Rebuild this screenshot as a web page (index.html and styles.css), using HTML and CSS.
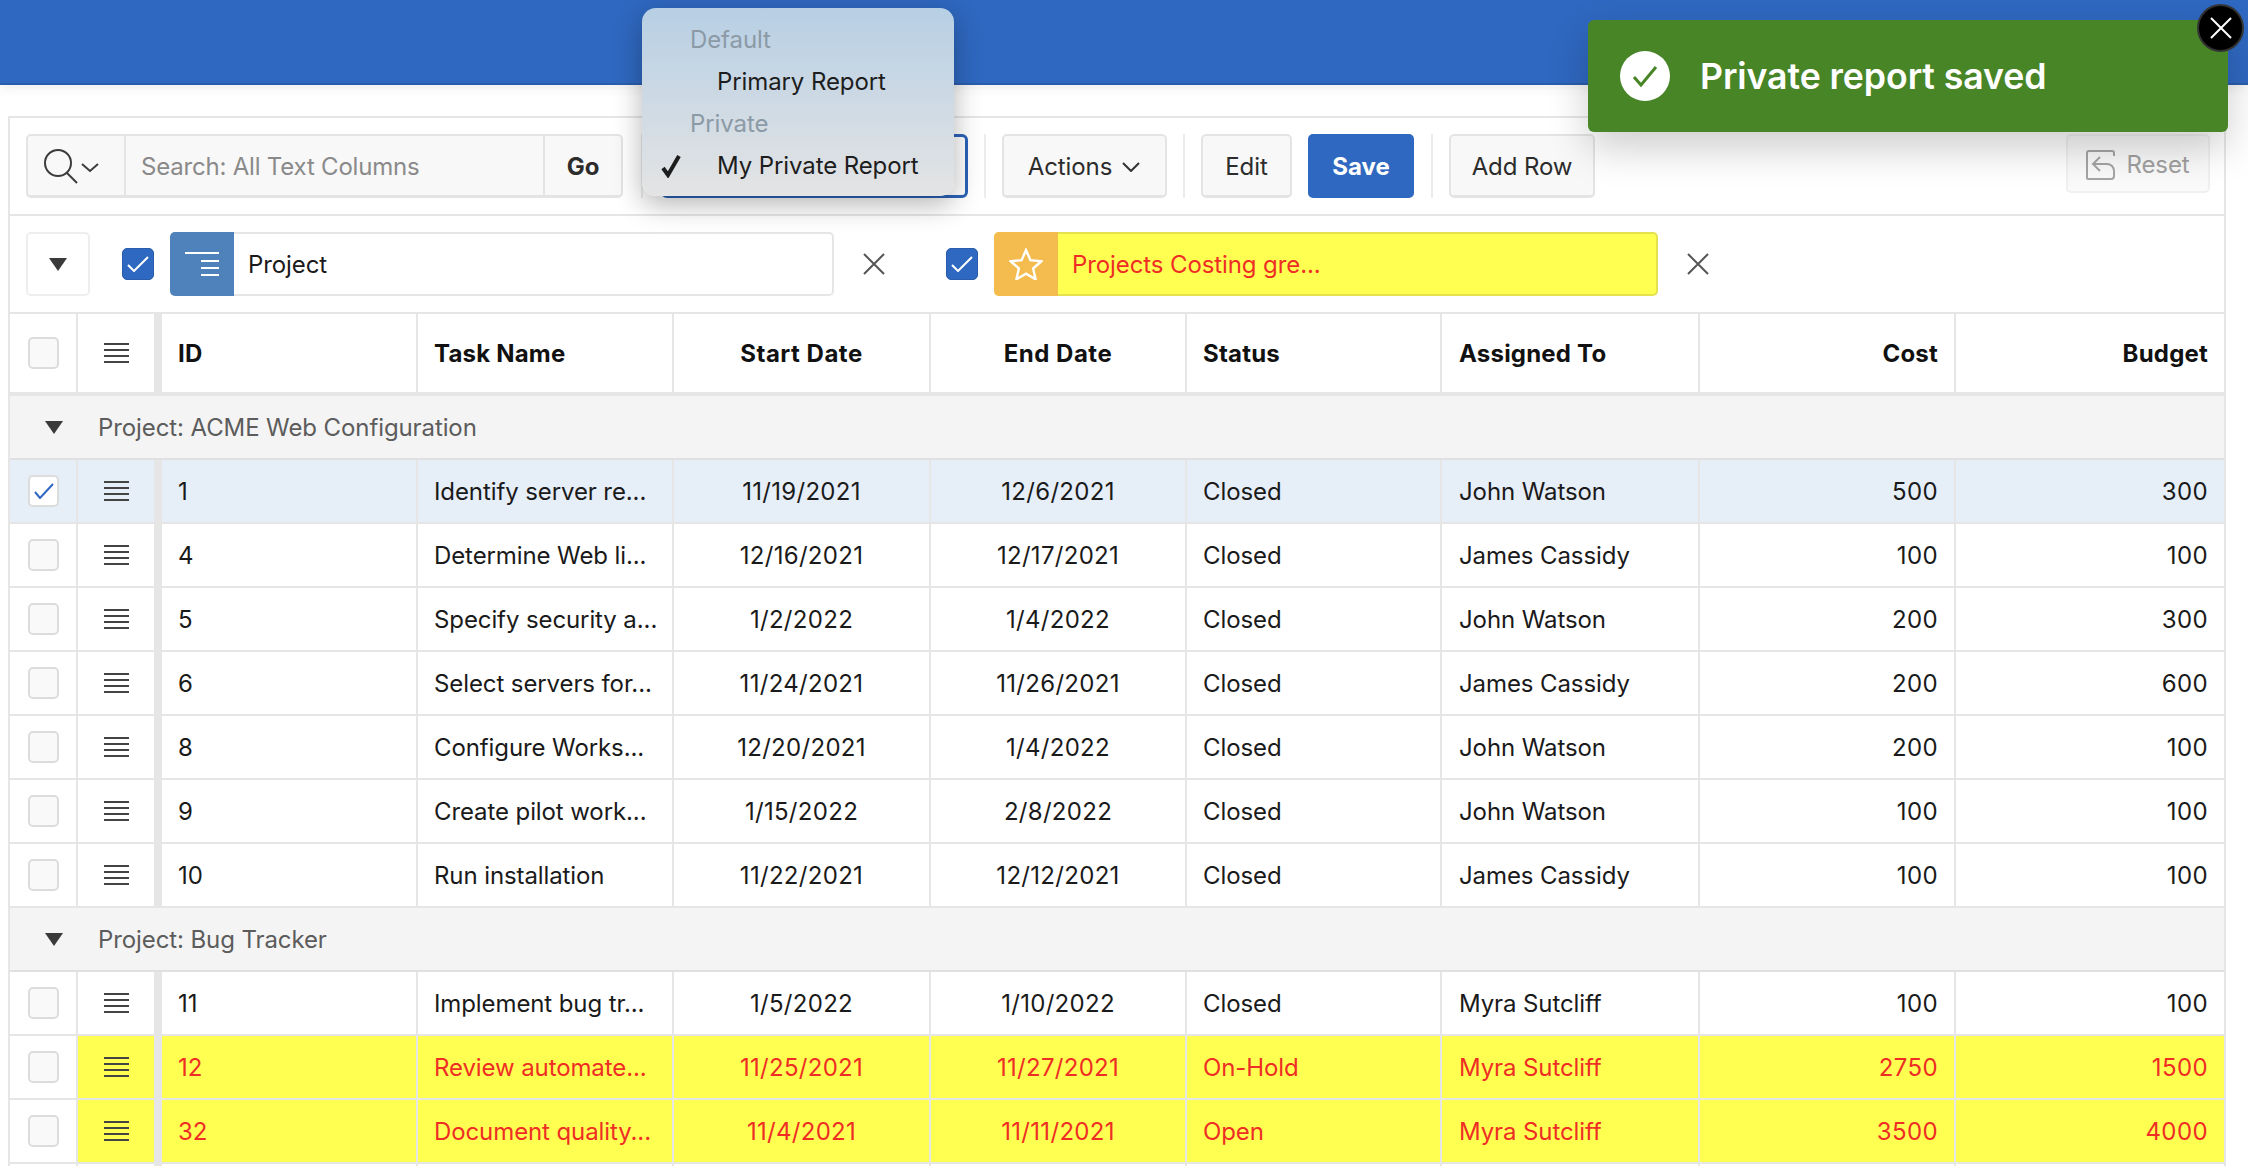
FILE: index.html
```html
<!DOCTYPE html>
<html lang="en">

<head>
    <meta charset="UTF-8">
    <title>Interactive Grid</title>
    <link rel="stylesheet" href="styles.css">
</head>

<body>
    <header class="topbar"></header>

    <main class="page">
        <section class="grid-region">
            <div class="toolbar">
                <div class="search">
                    <button class="search-type">
                        <svg width="72" height="52" viewBox="0 0 72 52" fill="none" stroke="#3c3c3c" stroke-width="2">
                            <circle cx="18" cy="23" r="13" />
                            <path d="M27 33l10 10" />
                            <path d="M42 24l8 7 8-7" />
                        </svg>
                    </button>
                    <div class="search-input">Search: All Text Columns</div>
                    <button class="search-go">Go</button>
                </div>
                <span class="tb-sep sep-a"></span>
                <div class="report-select"></div>
                <span class="tb-sep"></span>
                <button class="btn btn-actions">Actions
                    <svg width="20" height="10" viewBox="0 0 20 10" fill="none" stroke="#333" stroke-width="2">
                        <path d="M2 1l8 8 8-8" />
                    </svg>
                </button>
                <span class="tb-sep"></span>
                <button class="btn btn-edit">Edit</button>
                <button class="btn btn-save">Save</button>
                <span class="tb-sep"></span>
                <button class="btn btn-add">Add Row</button>
                <button class="btn btn-reset">
                    <svg width="30" height="30" viewBox="0 0 30 30" fill="none" stroke="#a5a5a5" stroke-width="2">
                        <path d="M28 6V3a2 2 0 0 0-2-2H3a2 2 0 0 0-2 2v25a1 1 0 0 0 1 1h23a3 3 0 0 0 3-3v-5c0-4-3-7-7-7H8" />
                        <path d="M14 7l-7 7 7 7" />
                    </svg>
                    Reset
                </button>
            </div>

            <div class="filters">
                <button class="filter-toggle"><span class="tri"></span></button>
                <span class="cb-on">
                    <svg width="22" height="16" viewBox="0 0 22 16" fill="none" stroke="#fff" stroke-width="2">
                        <path d="M1 9l6 6L21 1" />
                    </svg>
                </span>
                <div class="chip">
                    <span class="chip-icon">
                        <svg width="34" height="24" viewBox="0 0 34 24" fill="none" stroke="#fff" stroke-width="2">
                            <path d="M0 1h34M16 9h18M16 16h18M16 23h18" />
                        </svg>
                    </span>
                    <span class="chip-label">Project</span>
                </div>
                <svg class="chip-x" width="22" height="22" viewBox="0 0 22 22" fill="none" stroke="#555" stroke-width="2">
                    <path d="M1 1l20 20M21 1L1 21" />
                </svg>
                <span class="cb-on">
                    <svg width="22" height="16" viewBox="0 0 22 16" fill="none" stroke="#fff" stroke-width="2">
                        <path d="M1 9l6 6L21 1" />
                    </svg>
                </span>
                <div class="chip chip-hl">
                    <span class="chip-icon">
                        <svg width="34" height="32" viewBox="0 0 34 32" fill="none" stroke="#fff" stroke-width="2.4">
                            <path d="M17 2l4.400 10.200 11 1-8.300 7.300 2.500 10.800L17 25.600 7.400 31.300l2.500-10.800-8.300-7.300 11-1z" />
                        </svg>
                    </span>
                    <span class="chip-label">Projects Costing gre...</span>
                </div>
                <svg class="chip-x" width="22" height="22" viewBox="0 0 22 22" fill="none" stroke="#555" stroke-width="2">
                    <path d="M1 1l20 20M21 1L1 21" />
                </svg>
            </div>

            <div class="row head">
                <div class="c c-sel"><span class="cb"></span></div>
                <div class="c c-act"><span class="burger"></span></div>
                <div class="c">ID</div>
                <div class="c">Task Name</div>
                <div class="c mid">Start Date</div>
                <div class="c mid">End Date</div>
                <div class="c">Status</div>
                <div class="c c-who">Assigned To</div>
                <div class="c num">Cost</div>
                <div class="c num last">Budget</div>
            </div>

            <div class="group"><span class="tri"></span>Project: ACME Web Configuration</div>

            <div class="row selected">
                <div class="c c-sel"><span class="cb cb-checked">
                    <svg width="20" height="16" viewBox="0 0 20 16" fill="none" stroke="#2f68c0" stroke-width="2">
                        <path d="M1 9l5 6L19 1" />
                    </svg>
                </span></div>
                <div class="c c-act"><span class="burger"></span></div>
                <div class="c">1</div>
                <div class="c">Identify server re...</div>
                <div class="c mid">11/19/2021</div>
                <div class="c mid">12/6/2021</div>
                <div class="c">Closed</div>
                <div class="c c-who">John Watson</div>
                <div class="c num">500</div>
                <div class="c num last">300</div>
            </div>
            <div class="row">
                <div class="c c-sel"><span class="cb"></span></div>
                <div class="c c-act"><span class="burger"></span></div>
                <div class="c">4</div>
                <div class="c">Determine Web li...</div>
                <div class="c mid">12/16/2021</div>
                <div class="c mid">12/17/2021</div>
                <div class="c">Closed</div>
                <div class="c c-who">James Cassidy</div>
                <div class="c num">100</div>
                <div class="c num last">100</div>
            </div>
            <div class="row">
                <div class="c c-sel"><span class="cb"></span></div>
                <div class="c c-act"><span class="burger"></span></div>
                <div class="c">5</div>
                <div class="c">Specify security a...</div>
                <div class="c mid">1/2/2022</div>
                <div class="c mid">1/4/2022</div>
                <div class="c">Closed</div>
                <div class="c c-who">John Watson</div>
                <div class="c num">200</div>
                <div class="c num last">300</div>
            </div>
            <div class="row">
                <div class="c c-sel"><span class="cb"></span></div>
                <div class="c c-act"><span class="burger"></span></div>
                <div class="c">6</div>
                <div class="c">Select servers for...</div>
                <div class="c mid">11/24/2021</div>
                <div class="c mid">11/26/2021</div>
                <div class="c">Closed</div>
                <div class="c c-who">James Cassidy</div>
                <div class="c num">200</div>
                <div class="c num last">600</div>
            </div>
            <div class="row">
                <div class="c c-sel"><span class="cb"></span></div>
                <div class="c c-act"><span class="burger"></span></div>
                <div class="c">8</div>
                <div class="c">Configure Works...</div>
                <div class="c mid">12/20/2021</div>
                <div class="c mid">1/4/2022</div>
                <div class="c">Closed</div>
                <div class="c c-who">John Watson</div>
                <div class="c num">200</div>
                <div class="c num last">100</div>
            </div>
            <div class="row">
                <div class="c c-sel"><span class="cb"></span></div>
                <div class="c c-act"><span class="burger"></span></div>
                <div class="c">9</div>
                <div class="c">Create pilot work...</div>
                <div class="c mid">1/15/2022</div>
                <div class="c mid">2/8/2022</div>
                <div class="c">Closed</div>
                <div class="c c-who">John Watson</div>
                <div class="c num">100</div>
                <div class="c num last">100</div>
            </div>
            <div class="row">
                <div class="c c-sel"><span class="cb"></span></div>
                <div class="c c-act"><span class="burger"></span></div>
                <div class="c">10</div>
                <div class="c">Run installation</div>
                <div class="c mid">11/22/2021</div>
                <div class="c mid">12/12/2021</div>
                <div class="c">Closed</div>
                <div class="c c-who">James Cassidy</div>
                <div class="c num">100</div>
                <div class="c num last">100</div>
            </div>

            <div class="group"><span class="tri"></span>Project: Bug Tracker</div>

            <div class="row">
                <div class="c c-sel"><span class="cb"></span></div>
                <div class="c c-act"><span class="burger"></span></div>
                <div class="c">11</div>
                <div class="c">Implement bug tr...</div>
                <div class="c mid">1/5/2022</div>
                <div class="c mid">1/10/2022</div>
                <div class="c">Closed</div>
                <div class="c c-who">Myra Sutcliff</div>
                <div class="c num">100</div>
                <div class="c num last">100</div>
            </div>
            <div class="row flagged">
                <div class="c c-sel"><span class="cb"></span></div>
                <div class="c c-act"><span class="burger"></span></div>
                <div class="c">12</div>
                <div class="c">Review automate...</div>
                <div class="c mid">11/25/2021</div>
                <div class="c mid">11/27/2021</div>
                <div class="c">On-Hold</div>
                <div class="c c-who">Myra Sutcliff</div>
                <div class="c num">2750</div>
                <div class="c num last">1500</div>
            </div>
            <div class="row flagged">
                <div class="c c-sel"><span class="cb"></span></div>
                <div class="c c-act"><span class="burger"></span></div>
                <div class="c">32</div>
                <div class="c">Document quality...</div>
                <div class="c mid">11/4/2021</div>
                <div class="c mid">11/11/2021</div>
                <div class="c">Open</div>
                <div class="c c-who">Myra Sutcliff</div>
                <div class="c num">3500</div>
                <div class="c num last">4000</div>
            </div>
            <!-- next row is cut off by the window, only its column lines show -->
            <div class="row row-cut">
                <div class="c"></div>
                <div class="c c-act"></div>
                <div class="c"></div>
                <div class="c"></div>
                <div class="c"></div>
                <div class="c"></div>
                <div class="c"></div>
                <div class="c"></div>
                <div class="c"></div>
                <div class="c last"></div>
            </div>
        </section>
    </main>

    <!-- native select popup, open over the toolbar -->
    <div class="report-menu">
        <div class="menu-label">Default</div>
        <div class="menu-item">Primary Report</div>
        <div class="menu-label">Private</div>
        <div class="menu-item">
            <svg class="menu-check" width="20" height="24" viewBox="0 0 20 24" fill="none" stroke="#1d1d1d" stroke-width="4">
                <path d="M2 14l5 7L18 2" />
            </svg>
            My Private Report
        </div>
    </div>

    <div class="toast">
        <span class="toast-icon">
            <svg width="26" height="22" viewBox="0 0 26 22" fill="none" stroke="#488526" stroke-width="3">
                <path d="M2 12l7 8L24 2" />
            </svg>
        </span>
        <span class="toast-text">Private report saved</span>
        <button class="toast-close">
            <svg width="24" height="24" viewBox="0 0 24 24" fill="none" stroke="#fff" stroke-width="2">
                <path d="M2 2l20 20M22 2L2 22" />
            </svg>
        </button>
    </div>
</body>

</html>
```

FILE: styles.css
```css
* {
    box-sizing: border-box;
    margin: 0;
}

html {
    overflow: hidden;
}

body {
    width: 2248px;
    height: 1166px;
    overflow: hidden;
    background: #fff;
    color: #1a1a1a;
    font-family: Inter, "Liberation Sans", sans-serif;
    font-size: 24px;
    letter-spacing: -0.1px;
    position: relative;
}

button {
    font: inherit;
    letter-spacing: inherit;
    color: inherit;
    padding: 0;
}

.topbar {
    height: 85px;
    background: #2f68c0;
    border-bottom: 2px solid #2a5dad;
    box-shadow: 0 2px 12px rgba(0, 0, 0, 0.08);
}

.page {
    padding: 31px 22px 0 8px;
}

.grid-region {
    border: 2px solid #e6e6e6;
    border-bottom: 0;
}

/* toolbar */
.toolbar {
    height: 98px;
    padding: 16px 14px 16px 16px;
    display: flex;
    align-items: stretch;
    gap: 16px;
    border-bottom: 2px solid #e6e6e6;
}

.search {
    width: 597px;
    margin-right: 2px;
    display: flex;
    background: #f8f8f8;
    border: 2px solid #e4e4e4;
    border-bottom-width: 3px;
    border-radius: 5px;
}

.search-type {
    width: 98px;
    border: 0;
    border-right: 2px solid #e4e4e4;
    background: transparent;
    display: flex;
    align-items: center;
    justify-content: center;
}

.search-input {
    flex: 1;
    padding: 2px 0 0 15px;
    display: flex;
    align-items: center;
    color: #8a8a8a;
    letter-spacing: -0.2px;
}

.search-go {
    width: 78px;
    padding-top: 2px;
    border: 0;
    border-left: 2px solid #e4e4e4;
    background: transparent;
    font-weight: 700;
    color: #2c2c2c;
}

.tb-sep {
    width: 2px;
    background: #ececec;
}

.sep-a {
    margin-right: 2px;
}

.report-select {
    width: 307px;
    border: 3px solid #2a62b8;
    border-radius: 6px;
}

.btn {
    padding-top: 2px;
    background: #f8f8f8;
    border: 2px solid #e4e4e4;
    border-bottom-width: 3px;
    border-radius: 5px;
    color: #2c2c2c;
}

.btn-actions {
    width: 165px;
    display: flex;
    align-items: center;
    justify-content: center;
    gap: 9px;
}

.btn-edit {
    width: 91px;
}

.btn-save {
    width: 106px;
    margin-right: 1px;
    background: #2f68c0;
    border-color: #2f68c0;
    color: #fff;
    font-weight: 700;
    letter-spacing: 0;
}

.btn-add {
    width: 146px;
}

.btn-reset {
    width: 144px;
    height: 59px;
    margin-left: auto;
    display: flex;
    align-items: center;
    justify-content: center;
    gap: 10px;
    background: #fafafa;
    border: 2px solid #f0f0f0;
    color: #a0a0a0;
}

/* filter chips */
.filters {
    height: 98px;
    padding: 16px;
    display: flex;
    align-items: center;
    border-bottom: 2px solid #e6e6e6;
}

.filter-toggle {
    width: 64px;
    height: 64px;
    margin-right: 32px;
    background: #fff;
    border: 2px solid #eeeeee;
    border-radius: 5px;
    display: flex;
    align-items: center;
    justify-content: center;
}

.tri {
    width: 0;
    height: 0;
    border-left: 9px solid transparent;
    border-right: 9px solid transparent;
    border-top: 13px solid #3a3a3a;
}

.cb-on {
    width: 32px;
    height: 32px;
    margin-right: 16px;
    background: #2f68c0;
    border: 1px solid #2a5dad;
    border-radius: 5px;
    display: flex;
    align-items: center;
    justify-content: center;
}

.chip {
    width: 664px;
    height: 64px;
    display: flex;
    align-items: center;
    background: #fff;
    border: 2px solid #e6e6e6;
    border-left: 0;
    border-radius: 5px;
}

.chip-icon {
    width: 64px;
    height: 64px;
    margin-top: -2px;
    margin-bottom: -2px;
    flex: none;
    background: #4f81ba;
    border-radius: 5px 0 0 5px;
    display: flex;
    align-items: center;
    justify-content: center;
}

.chip-label {
    padding-left: 14px;
}

.chip-hl {
    background: #ffff52;
    border-color: #e4e24e;
    color: #ee2e24;
}

.chip-hl .chip-icon {
    background: #f4bb4f;
}

.chip-x {
    flex: none;
    margin: 0 61px 0 29px;
}

/* report rows */
.row {
    display: grid;
    grid-template-columns: 68px 84px 256px 256px 257px 256px 255px 258px 256px 268px;
    height: 64px;
    border-bottom: 2px solid #e6e6e6;
}

.row-cut {
    height: 2px;
    border-bottom: 0;
}

.c {
    padding: 0 16px;
    display: flex;
    align-items: center;
    border-right: 2px solid #e6e6e6;
    white-space: nowrap;
}

.c.mid {
    justify-content: center;
    letter-spacing: 0.3px;
}

.c.num {
    justify-content: flex-end;
    letter-spacing: 0.4px;
}

.c.last {
    border-right: 0;
}

.c-who {
    padding-left: 17px;
}

.c-sel {
    padding: 0 0 0 18px;
}

.c-act {
    padding: 0 0 0 26px;
    border-right: 8px solid #e6e6e6;
}

.head {
    height: 82px;
    border-bottom-width: 4px;
    font-weight: 700;
    color: #111;
}

.head .c {
    letter-spacing: 0.2px;
}

.head .c.mid {
    letter-spacing: 0.5px;
}

.head .c.num {
    letter-spacing: 0.2px;
}

.group {
    height: 64px;
    padding-left: 35px;
    display: flex;
    align-items: center;
    gap: 35px;
    background: #f4f4f4;
    border-bottom: 2px solid #e0e0e0;
    color: #5c5c5c;
}

.cb {
    width: 31px;
    height: 32px;
    background: #f9f9f9;
    border: 2px solid #dcdcdc;
    border-radius: 5px;
    display: flex;
    align-items: center;
    justify-content: center;
}

.cb-checked {
    background: #fff;
}

.burger {
    width: 25px;
    height: 20px;
    background: repeating-linear-gradient(#444 0 2px, transparent 2px 6px);
}

.selected .c {
    background: #e6eef8;
}

.flagged .c:not(.c-sel) {
    background: #ffff52;
    color: #ee2e24;
}

/* popup and toast */
.report-menu {
    position: absolute;
    left: 642px;
    top: 8px;
    width: 312px;
    height: 188px;
    padding-top: 10px;
    background: linear-gradient(#b7cfe4, #e4e4e4);
    border-radius: 14px;
    box-shadow: 0 8px 28px rgba(0, 0, 0, 0.3);
}

.menu-label,
.menu-item {
    height: 42px;
    display: flex;
    align-items: center;
    position: relative;
}

.menu-label {
    padding-left: 48px;
    color: #8b9aa6;
}

.menu-item {
    padding-left: 75px;
    color: #1d1d1d;
}

.menu-check {
    position: absolute;
    left: 19px;
    top: 10px;
}

.toast {
    position: absolute;
    left: 1588px;
    top: 20px;
    width: 640px;
    height: 112px;
    padding-left: 32px;
    display: flex;
    align-items: center;
    gap: 30px;
    background: #488526;
    border-radius: 6px;
    box-shadow: 0 16px 40px rgba(0, 0, 0, 0.2);
    color: #fff;
}

.toast-icon {
    width: 50px;
    height: 50px;
    background: #fff;
    border-radius: 50%;
    display: flex;
    align-items: center;
    justify-content: center;
}

.toast-text {
    font-size: 35.7px;
    font-weight: 600;
}

.toast-close {
    position: absolute;
    right: -16px;
    top: -16px;
    width: 47px;
    height: 48px;
    background: #000;
    border: 2px solid #333;
    border-radius: 50%;
    display: flex;
    align-items: center;
    justify-content: center;
}
```
